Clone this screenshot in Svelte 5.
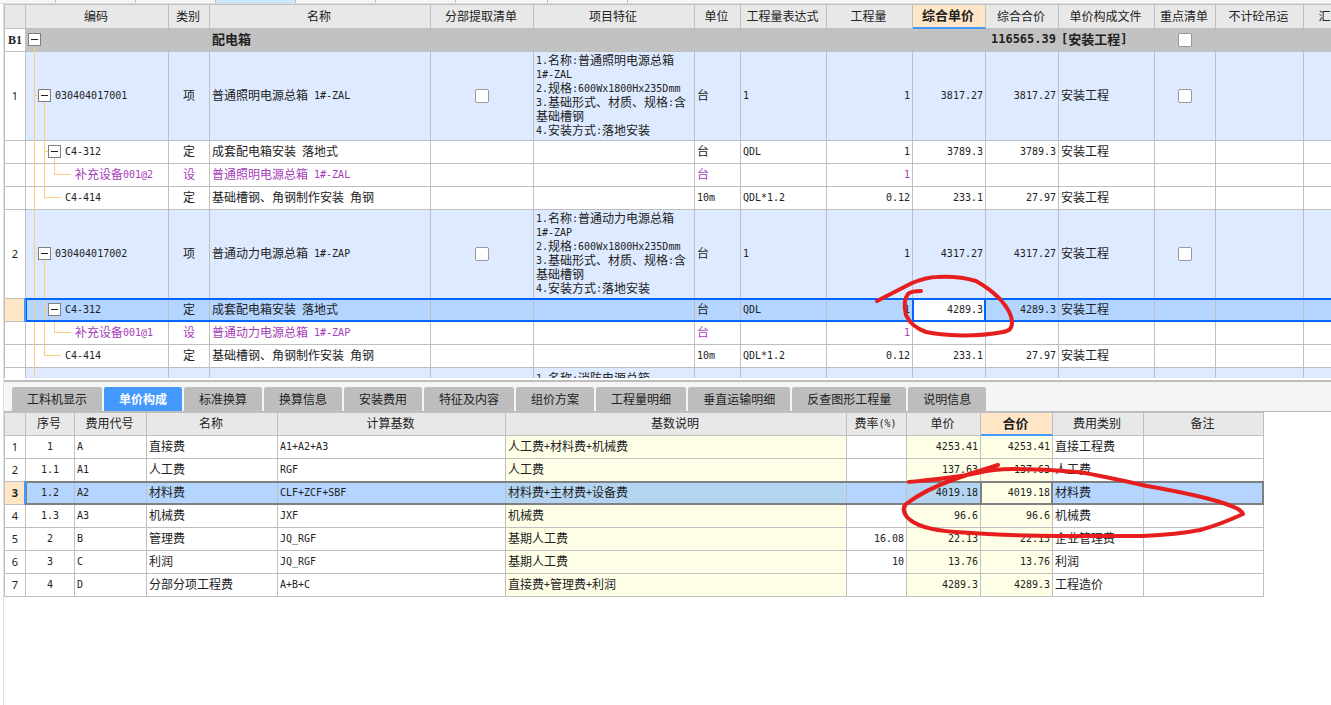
<script>
  const windowTabs = [56, 80, 80, 80, 80, 80, 92, 80];

  const itemCols = [
    { label: '', w: 22 },
    { label: '编码', w: 143 },
    { label: '类别', w: 41 },
    { label: '名称', w: 221 },
    { label: '分部提取清单', w: 103 },
    { label: '项目特征', w: 161 },
    { label: '单位', w: 46 },
    { label: '工程量表达式', w: 86 },
    { label: '工程量', w: 86 },
    { label: '综合单价', w: 73, active: true },
    { label: '综合合价', w: 73 },
    { label: '单价构成文件', w: 96 },
    { label: '重点清单', w: 61 },
    { label: '不计砼吊运', w: 88 },
    { label: '汇总类别', w: 80 }
  ];

  const features = (code) => [
    '1.名称:普通' + (code === 'ZAL' ? '照明' : '动力') + '电源总箱',
    '1#-' + code,
    '2.规格:600Wx1800Hx235Dmm',
    '3.基础形式、材质、规格:含',
    '基础槽钢',
    '4.安装方式:落地安装'
  ];

  // lines: vertical guides as [x, part]; elbow: [x, width] of the horizontal guide
  const items = [
    { no: 'B1', kind: 'group', level: 0, open: true, code: '', type: '', name: '配电箱', total: '116565.39', file: '[安装工程]', key: true, lines: [[8, 'start']] },
    { no: '1', kind: 'item', level: 1, open: true, code: '030404017001', type: '项', name: '普通照明电源总箱 1#-ZAL', pick: true, features: features('ZAL'), unit: '台', expr: '1', qty: '1', price: '3817.27', total: '3817.27', file: '安装工程', key: true, lines: [[8, 'full'], [18, 'start']], elbow: [8, 4] },
    { kind: 'norm', level: 2, open: true, code: 'C4-312', type: '定', name: '成套配电箱安装 落地式', unit: '台', expr: 'QDL', qty: '1', price: '3789.3', total: '3789.3', file: '安装工程', lines: [[8, 'full'], [18, 'full'], [28, 'start']], elbow: [18, 4] },
    { kind: 'device', level: 3, code: '补充设备001@2', type: '设', name: '普通照明电源总箱 1#-ZAL', unit: '台', qty: '1', lines: [[8, 'full'], [18, 'full'], [28, 'end']], elbow: [28, 17] },
    { kind: 'norm', level: 2, code: 'C4-414', type: '定', name: '基础槽钢、角钢制作安装 角钢', unit: '10m', expr: 'QDL*1.2', qty: '0.12', price: '233.1', total: '27.97', file: '安装工程', lines: [[8, 'full'], [18, 'end']], elbow: [18, 17] },
    { no: '2', kind: 'item', level: 1, open: true, code: '030404017002', type: '项', name: '普通动力电源总箱 1#-ZAP', pick: true, features: features('ZAP'), unit: '台', expr: '1', qty: '1', price: '4317.27', total: '4317.27', file: '安装工程', key: true, lines: [[8, 'full'], [18, 'start']], elbow: [8, 4] },
    { kind: 'norm', level: 2, selected: true, open: true, code: 'C4-312', type: '定', name: '成套配电箱安装 落地式', unit: '台', expr: 'QDL', qty: '1', price: '4289.3', total: '4289.3', file: '安装工程', lines: [[8, 'full'], [18, 'full'], [28, 'start']], elbow: [18, 4] },
    { kind: 'device', level: 3, code: '补充设备001@1', type: '设', name: '普通动力电源总箱 1#-ZAP', unit: '台', qty: '1', lines: [[8, 'full'], [18, 'full'], [28, 'end']], elbow: [28, 17] },
    { kind: 'norm', level: 2, code: 'C4-414', type: '定', name: '基础槽钢、角钢制作安装 角钢', unit: '10m', expr: 'QDL*1.2', qty: '0.12', price: '233.1', total: '27.97', file: '安装工程', lines: [[8, 'full'], [18, 'end']], elbow: [18, 17] },
    { kind: 'item', level: 1, code: '', type: '', name: '', features: ['1.名称:消防电源总箱'], lines: [[8, 'full']] }
  ];

  const tabs = ['工料机显示', '单价构成', '标准换算', '换算信息', '安装费用', '特征及内容', '组价方案', '工程量明细', '垂直运输明细', '反查图形工程量', '说明信息'];
  let current = $state('单价构成');

  const feeCols = [
    { label: '', w: 22 },
    { label: '序号', w: 49 },
    { label: '费用代号', w: 72 },
    { label: '名称', w: 131 },
    { label: '计算基数', w: 228 },
    { label: '基数说明', w: 341 },
    { label: '费率(%)', w: 60 },
    { label: '单价', w: 74 },
    { label: '合价', w: 72, active: true },
    { label: '费用类别', w: 91 },
    { label: '备注', w: 120 }
  ];

  const fees = [
    ['1', 'A', '直接费', 'A1+A2+A3', '人工费+材料费+机械费', '', '4253.41', '直接工程费'],
    ['1.1', 'A1', '人工费', 'RGF', '人工费', '', '137.63', '人工费'],
    ['1.2', 'A2', '材料费', 'CLF+ZCF+SBF', '材料费+主材费+设备费', '', '4019.18', '材料费'],
    ['1.3', 'A3', '机械费', 'JXF', '机械费', '', '96.6', '机械费'],
    ['2', 'B', '管理费', 'JQ_RGF', '基期人工费', '16.08', '22.13', '企业管理费'],
    ['3', 'C', '利润', 'JQ_RGF', '基期人工费', '10', '13.76', '利润'],
    ['4', 'D', '分部分项工程费', 'A+B+C', '直接费+管理费+利润', '', '4289.3', '工程造价']
  ];

  const sum = (cols) => cols.reduce((total, c) => total + c.w, 0);
  const runs = (text) => (text ?? '').match(/[\x20-\x7e]+|[^\x20-\x7e]+/g) ?? [];
</script>

{#snippet mixed(text)}{#each runs(text) as run}{#if /[\x20-\x7e]/.test(run)}<span class="latin">{run}</span>{:else}{run}{/if}{/each}{/snippet}

{#snippet head(cols)}
  <colgroup>
    {#each cols as c}<col style="width:{c.w}px" />{/each}
  </colgroup>
  <thead>
    <tr>
      {#each cols as c}<th scope="col" class:active={c.active}>{@render mixed(c.label)}</th>{/each}
    </tr>
  </thead>
{/snippet}

<main>
  <div class="strip" aria-hidden="true">
    {#each windowTabs as w, i}<span class:on={i === 3} style="width:{w}px"></span>{/each}
  </div>

  <div class="body">
    <section class="items">
      <table style="width:{sum(itemCols)}px">
        {@render head(itemCols)}
        <tbody>
          {#each items as r}
            <tr class={r.kind} class:selected={r.selected}>
              <td class="no">{r.no ?? ''}</td>
              <td class="tree">
                {#each r.lines as [x, part]}<i class="guide {part}" style="left:{x}px"></i>{/each}
                {#if r.elbow}<i class="elbow" style="left:{r.elbow[0]}px;width:{r.elbow[1]}px"></i>{/if}
                <div class="node" style="padding-left:{2 + r.level * 10}px">
                  {#if r.open}<button aria-label="折叠"></button>{:else if r.level === 2}<b class="gap"></b>{/if}
                  <span class="code" class:leaf={r.level === 3}>{@render mixed(r.code)}</span>
                </div>
              </td>
              <td class="mid">{r.type}</td>
              <td>{@render mixed(r.name)}</td>
              <td class="check">{#if r.pick}<input type="checkbox" aria-label="分部提取清单" />{/if}</td>
              <td class="features">{#each r.features ?? [] as line}<div>{@render mixed(line)}</div>{/each}</td>
              <td>{@render mixed(r.unit)}</td>
              <td>{@render mixed(r.expr)}</td>
              <td class="num">{@render mixed(r.qty)}</td>
              <td class="num" class:editing={r.selected}>{@render mixed(r.price)}</td>
              <td class="num">{@render mixed(r.total)}</td>
              <td>{@render mixed(r.file)}</td>
              <td class="check">{#if r.key}<input type="checkbox" aria-label="重点清单" />{/if}</td>
              <td></td>
              <td></td>
            </tr>
          {/each}
        </tbody>
      </table>
    </section>

    <nav>
      {#each tabs as t}
        <button class="tab" class:current={t === current} onclick={() => (current = t)}>{t}</button>
      {/each}
    </nav>

    <section class="fees">
      <table style="width:{sum(feeCols)}px">
        {@render head(feeCols)}
        <tbody>
          {#each fees as f, i}
            <tr class:selected={i === 2}>
              <td class="no">{i + 1}</td>
              <td class="mid">{@render mixed(f[0])}</td>
              <td>{@render mixed(f[1])}</td>
              <td>{@render mixed(f[2])}</td>
              <td>{@render mixed(f[3])}</td>
              <td class="calc">{@render mixed(f[4])}</td>
              <td class="num">{@render mixed(f[5])}</td>
              <td class="num calc">{@render mixed(f[6])}</td>
              <td class="num calc" class:editing={i === 2}>{@render mixed(f[6])}</td>
              <td>{@render mixed(f[7])}</td>
              <td></td>
            </tr>
          {/each}
        </tbody>
      </table>
    </section>
  </div>

  <svg class="marks" width="1331" height="705" viewBox="0 0 1331 705" aria-hidden="true">
    <path d="M877 301 L912 283 C922 279 928 277 937 277 C953 276 966 278 976 281 C985 286 993 292 1000 299 C1008 308 1012 316 1012 322 C1012 329 1009 331 1003 332 C988 335 975 335.500 962 335.500 C945 335 935 334 926 332 C915 328 909 322 906 315 C904 307 904 299 908 294 Q911 291 921 291" />
    <path d="M998 465 Q975 472 955 479 C935 486 918 495 906 504 Q901 509 907 517 C915 526 930 530 955 532 C985 534 1030 536 1060 536 L1143 536 C1165 535 1185 533 1200 530 C1215 526 1230 520 1243 514 C1241 509 1232 506 1220 502 C1200 496 1170 490 1147 486 C1120 480 1095 474 1077 472 C1055 470 1040 469 1013 469 C995 469 985 471 977 473 C955 478 930 480 909 482" />
  </svg>
</main>

<style>
  :global(body) { margin: 0; background: #fff; }

  main {
    position: relative;
    min-height: 100vh;
    display: flex;
    flex-direction: column;
    overflow: hidden;
    color: #222;
    font: 12px/14px "Noto Sans CJK SC", sans-serif;
  }

  .latin {
    font-family: "DejaVu Sans Mono", monospace;
    font-size: 10px;
    line-height: 1;
    vertical-align: 1px;
    white-space: pre;
  }

  .strip {
    display: flex;
    height: 3px;
    background: #f5f5f5;
    border-bottom: 1px solid #ddd;
  }
  .strip span { box-sizing: border-box; border-right: 1px solid #bfbfbf; }
  .strip .on { background: #cce8ff; }

  .body {
    flex: 1;
    margin-left: 3px;
    border-left: 1px solid #e0e0e0;
  }

  .items { height: 374px; overflow: hidden; }

  table {
    table-layout: fixed;
    border-collapse: separate;
    border-spacing: 0;
    border-top: 1px solid #bfbfbf;
  }
  tr { position: relative; }
  th, td {
    box-sizing: border-box;
    height: 23px;
    padding: 0 2px 2px;
    border: solid #bfbfbf;
    border-width: 0 1px 1px 0;
    white-space: nowrap;
    text-align: left;
  }
  th {
    padding: 0 2px 2px 0;
    background: #e8e8e8;
    font-weight: 400;
    text-align: center;
  }
  .items th { height: 24px; }
  th:first-child, td:first-child { border-left-width: 1px; }
  th.active {
    background: #ffe6c7;
    border-bottom: 2px solid #4499ff;
    font-size: 13px;
    font-weight: 700;
  }

  .no {
    padding: 0;
    background: #fff;
    text-align: center;
    font-family: "Noto Sans", sans-serif;
    font-size: 11px;
  }
  .mid { text-align: center; }
  .check { padding: 0; }
  .num { text-align: right; }
  .calc { background: #ffffe8; }

  .group td { background: #c2c2c2; font-size: 13px; font-weight: 700; }
  .group .latin { font-size: 12px; }
  .group .no { background: #fff; font-family: "Liberation Serif", serif; font-size: 12px; }
  .item td { background: #deeaff; }
  .item .no { background: #fff; }
  .device td { color: #a63db8; }
  .items .features { padding: 1px 2px 3px; }
  .items tr:not(.item) .features { padding: 0; }

  .selected td { background: #b3d5ff; }
  .selected td.calc { background: #b3d5f1; }
  .selected .no { position: relative; background: #ffe6c7; font-weight: 700; }
  .selected .no::after {
    content: "";
    position: absolute;
    z-index: 2;
    inset: -1px -1px -1px auto;
    width: 2px;
    background: #4499ff;
  }
  .selected::after {
    content: "";
    position: absolute;
    inset: -1px 0 0 21px;
    border: 2px solid #0066ff;
    pointer-events: none;
  }
  .selected td.editing { position: relative; background: #fff; }
  .selected .editing::after {
    content: "";
    position: absolute;
    inset: -1px;
    border: 2px solid #0066ff;
  }
  .fees .selected::after, .fees .selected .editing::after { border-color: #808080; }
  .fees .selected td.editing { background: #ffffe8; }

  td.tree { position: relative; padding: 0 0 2px; }
  .node { display: flex; align-items: center; }
  .node button {
    position: relative;
    flex: none;
    box-sizing: border-box;
    width: 13px;
    height: 13px;
    padding: 0;
    border: 1px solid #808080;
    background: linear-gradient(#222, #222) center / 7px 1px no-repeat #fff;
  }
  .gap { width: 13px; }
  .code { margin-left: 4px; }
  .leaf { margin-left: 17px; }
  .guide, .elbow { position: absolute; background: #ffcc80; }
  .guide { width: 1px; top: 0; bottom: -1px; }
  .guide.start { top: 50%; }
  .guide.end { bottom: 50%; }
  .elbow { height: 1px; top: calc(50% - 1px); }

  input {
    appearance: none;
    box-sizing: border-box;
    display: block;
    width: 14px;
    height: 14px;
    margin: 0 auto;
    border: 1px solid #999;
    border-radius: 2px;
    background: #fff;
  }

  nav {
    display: flex;
    gap: 2px;
    margin-top: 2px;
    padding: 5px 8px 0;
    background: #f5f5f5;
    border-top: 2px solid #bdbdbd;
    border-bottom: 1px solid #bdbdbd;
  }
  .tab {
    height: 24px;
    padding: 0 15px;
    border: 0;
    border-radius: 2px 2px 0 0;
    background: #bdbdbd;
    color: #222;
    font: inherit;
    white-space: nowrap;
  }
  .tab.current { background: #4499ff; color: #fff; font-weight: 700; }

  .marks { position: absolute; top: 0; left: 0; pointer-events: none; }
  .marks path {
    fill: none;
    stroke: #e61e1e;
    stroke-width: 4;
    stroke-linecap: round;
    stroke-linejoin: round;
  }
</style>
